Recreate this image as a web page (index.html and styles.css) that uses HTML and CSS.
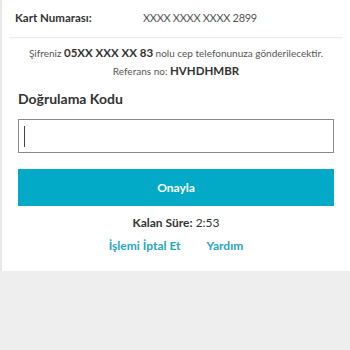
FILE: index.html
```html
<!DOCTYPE html>
<html lang="tr">
<head>
<meta charset="utf-8">
<link rel="stylesheet" href="styles.css">
</head>
<body>
<div class="card">
  <div class="kart-row">
    <span class="kart-label">Kart Numarası:</span>
    <span class="kart-value">XXXX XXXX XXXX 2899</span>
  </div>
  <div class="divider"></div>
  <p class="info">Şifreniz <b>05XX XXX XX 83</b> nolu cep telefonunuza gönderilecektir.</p>
  <p class="info ref">Referans no: <b>HVHDHMBR</b></p>
  <div class="form">
    <label class="field-label">Doğrulama Kodu</label>
    <div class="input"><span class="caret"></span></div>
    <button class="btn">Onayla</button>
    <p class="timer"><b>Kalan Süre:</b> 2:53</p>
    <div class="links">
      <a class="link">İşlemi İptal Et</a>
      <a class="link">Yardım</a>
    </div>
  </div>
</div>
</body>
</html>
```
FILE: styles.css
```css
html, body {
  margin: 0;
  padding: 0;
  background: #eeeeee;
  font-family: Lato, "Open Sans", sans-serif;
  color: #333;
}
.card {
  margin-left: 1px;
  height: 271px;
  box-sizing: border-box;
  background: #fff;
  border-left: 1px solid #e6e6e6;
  box-shadow: 0 1px 2px rgba(0,0,0,0.06);
}
.kart-row {
  display: flex;
  padding: 10px 0 0 13px;
  height: 27px;
  font-size: 12px;
  line-height: 16px;
}
.kart-label {
  width: 128px;
  font-weight: 700;
  font-size: 11.5px;
  color: #333;
}
.kart-value {
  color: #555;
  font-size: 11px;
  letter-spacing: -0.3px;
}
.divider {
  margin: 0 7px 0 7px;
  height: 1px;
  background: #ececec;
  box-shadow: 0 1px 1px rgba(0,0,0,0.03);
}
.info {
  margin: 0;
  text-align: center;
  font-size: 10px;
  color: #555;
  line-height: 18px;
}
.info:first-of-type { margin-top: 6px; }
.info b {
  font-size: 11.5px;
  font-weight: 700;
  color: #333;
}
.ref { margin-top: 0; }
.form {
  padding: 0 16px 0 16px;
}
.field-label {
  display: block;
  margin-top: 10px;
  font-size: 14px;
  font-weight: 700;
  color: #333;
  line-height: 18px;
}
.input {
  margin-top: 11px;
  height: 34px;
  box-sizing: border-box;
  border: 1px solid #8a8a8a;
  display: flex;
  align-items: center;
  padding-left: 5px;
}
.caret {
  width: 1px;
  height: 21px;
  background: #444;
}
.btn {
  display: block;
  width: 100%;
  margin-top: 16px;
  height: 37px;
  border: 0;
  background: #02aac8;
  color: #fff;
  font-family: inherit;
  font-size: 12px;
  font-weight: 700;
}
.timer {
  margin: 9px 0 0;
  text-align: center;
  font-size: 12px;
  line-height: 16px;
  color: #333;
}
.timer b { font-weight: 700; }
.links {
  margin-top: 7px;
  display: flex;
  justify-content: center;
  gap: 26px;
  font-size: 12px;
  line-height: 16px;
}
.link {
  color: #28a6c4;
  font-weight: 700;
}
```
